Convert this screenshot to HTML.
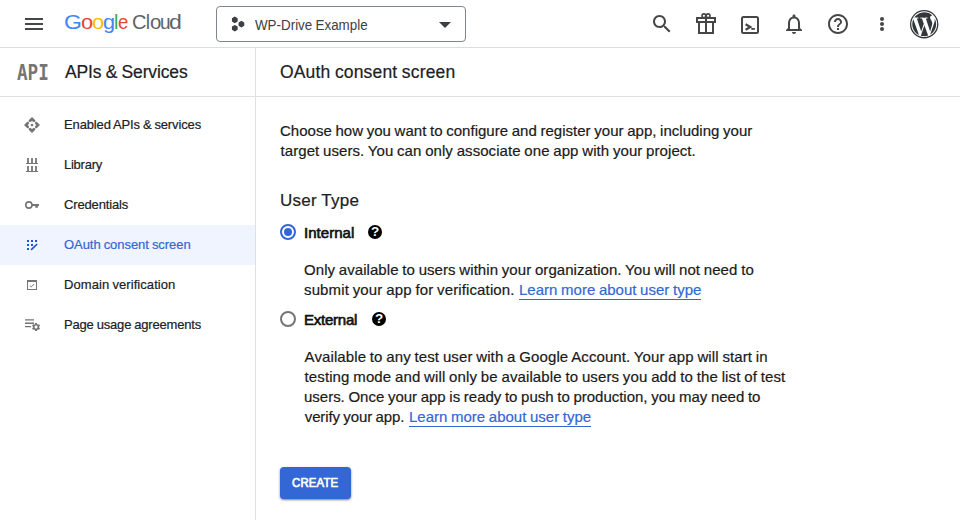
<!DOCTYPE html>
<html lang="en">
<head>
<meta charset="utf-8">
<title>OAuth consent screen – APIs &amp; Services – WP-Drive Example – Google Cloud console</title>
<style>
*{box-sizing:border-box;margin:0;padding:0}
html,body{width:960px;height:520px;overflow:hidden;background:#fff}
body{font-family:"Liberation Sans",sans-serif;color:#202124;position:relative;-webkit-text-stroke:0.2px currentColor;word-spacing:-0.031em}
.abs{position:absolute}
.t{position:absolute;white-space:nowrap;line-height:20px;height:20px;transform-origin:0 50%}
svg{position:absolute;overflow:visible}
#hdr{position:absolute;left:0;top:0;width:960px;height:48px;border-bottom:1px solid #dadce0;background:#fff}
#proj{position:absolute;left:216px;top:6px;width:250px;height:36px;border:1px solid #80868b;border-radius:4px}
#row2{position:absolute;left:0;top:48px;width:960px;height:49px;border-bottom:1px solid #e0e0e0}
#side{position:absolute;left:0;top:48px;width:256px;height:472px;border-right:1px solid #e0e0e0}
.nav{position:absolute;left:0;width:255px;height:40px}
.nav.on{background:#f0f4fe}
.nav .t{left:64px;top:10px;font-size:13px;color:#202124}
.nav.on .t{color:#3367d6}
.l{position:absolute;font-size:15px;line-height:20px;height:20px;color:#1a1a1a;white-space:nowrap}
.lk{color:#3367d6;border-bottom:1px solid #3367d6;height:20px}
.med{-webkit-text-stroke:0.65px currentColor;color:#111}
.radio{position:absolute;width:16px;height:16px;border-radius:50%;border:2px solid #757575}
.radio.on{border-color:#3367d6}
.radio.on::after{content:"";position:absolute;left:2px;top:2px;width:8px;height:8px;border-radius:50%;background:#3367d6}
.q{position:absolute;width:14px;height:14px;border-radius:50%;background:#000;color:#fff;font-size:13.500px;font-weight:bold;line-height:14.500px;text-align:center;-webkit-text-stroke:0}
</style>
</head>
<body>
<div id="hdr">
  <svg style="left:22px;top:12px" width="24" height="24" viewBox="0 0 24 24"><path fill="#444746" d="M3 18h18v-2H3v2zm0-5h18v-2H3v2zm0-7v2h18V6H3z"/></svg>
  <div id="logoG" class="abs" style="left:0;top:0;-webkit-text-stroke:0"><span class="t" id="lg_G" style="left:63.54px;top:12px;font-size:21px;color:#4285f4;transform:scaleX(1.095)">G</span><span class="t" id="lg_o1" style="left:81.01px;top:12px;font-size:19.5px;color:#ea4335;transform:scaleX(1.119)">o</span><span class="t" id="lg_o2" style="left:91.77px;top:12px;font-size:19.5px;color:#fbbc05;transform:scaleX(1.127)">o</span><span class="t" id="lg_g" style="left:103.41px;top:12px;font-size:19.5px;color:#4285f4;transform:scaleX(1.113)">g</span><span class="t" id="lg_l" style="left:114.04px;top:12px;font-size:19.5px;color:#34a853;transform:scaleX(1)">l</span><span class="t" id="lg_e" style="left:118.48px;top:12px;font-size:19.5px;color:#ea4335;transform:scaleX(0.952)">e</span> <span class="t" id="lg_C" style="left:131.54px;top:12px;font-size:19.5px;color:#5f6368;transform:scaleX(1.03)">C</span><span class="t" id="lg_l2" style="left:145.67px;top:12px;font-size:19.5px;color:#5f6368;transform:scaleX(1)">l</span><span class="t" id="lg_o3" style="left:149.84px;top:12px;font-size:19.5px;color:#5f6368;transform:scaleX(1.046)">o</span><span class="t" id="lg_u" style="left:160.21px;top:12px;font-size:19.5px;color:#5f6368;transform:scaleX(0.973)">u</span><span class="t" id="lg_d" style="left:169.21px;top:12px;font-size:19.5px;color:#5f6368;transform:scaleX(1.183)">d</span></div>
  <div id="proj">
    <svg style="left:14px;top:10px" width="16" height="16" viewBox="0 0 16 16" fill="#3c4043"><path d="M3.80 -0.40L6.66 1.25L6.66 4.55L3.80 6.20L0.94 4.55L0.94 1.25ZM10.40 3.80L13.26 5.45L13.26 8.75L10.40 10.40L7.54 8.75L7.54 5.45ZM3.80 7.90L6.66 9.55L6.66 12.85L3.80 14.50L0.94 12.85L0.94 9.55Z"/></svg>
    <div class="t" id="projT" style="left:38.400px;top:8px;font-size:15.500px;color:#3c4043;-webkit-text-stroke:0;transform:scaleX(0.862);letter-spacing:0.014px">WP-Drive Example</div>
    <svg style="left:222px;top:15px" width="12" height="6" viewBox="0 0 12 6"><path fill="#3c4043" d="M0 0h12L6 6z"/></svg>
  </div>
  <svg style="left:650px;top:12px" width="24" height="24" viewBox="0 0 24 24"><path fill="#444746" d="M15.5 14h-.79l-.28-.27C15.41 12.59 16 11.11 16 9.5 16 5.91 13.09 3 9.5 3S3 5.91 3 9.500 5.910 16 9.500 16c1.610 0 3.090-.59 4.230-1.570l.27.28v.79l5 4.990L20.490 19l-4.990-5zm-6 0C7.010 14 5 11.990 5 9.500S7.010 5 9.500 5 14 7.010 14 9.500 11.990 14 9.500 14z"/></svg>
  <svg id="gift" style="left:694px;top:12px" width="24" height="24" viewBox="0 0 24 24" fill="none" stroke="#444746" stroke-width="2"><rect x="3" y="6" width="18" height="4"/><path d="M5 10v11h14V10M12 5v16"/><circle cx="9.900" cy="3.800" r="1.900" stroke-width="1.600"/><circle cx="14.100" cy="3.800" r="1.900" stroke-width="1.600"/></svg>
  <svg id="term" style="left:738px;top:13px" width="24" height="24" viewBox="0 0 24 24" fill="none" stroke="#444746"><rect x="4" y="4" width="16" height="16" rx="1.500" stroke-width="2"/><path d="M7.600 11.300L12.300 14l-4.700 2.700" stroke-width="2.200"/><path d="M13.300 15.900h3.600" stroke-width="1.800"/></svg>
  <svg style="left:782px;top:12px" width="24" height="24" viewBox="0 0 24 24"><path fill="#444746" d="M12 22c1.100 0 2-.9 2-2h-4c0 1.100.9 2 2 2zm6-6v-5c0-3.070-1.630-5.640-4.500-6.320V4c0-.83-.67-1.500-1.500-1.500s-1.500.67-1.500 1.500v.68C7.640 5.360 6 7.920 6 11v5l-2 2v1h16v-1l-2-2zm-2 1H8v-6c0-2.480 1.510-4.500 4-4.500s4 2.020 4 4.500v6z"/></svg>
  <svg style="left:826px;top:12px" width="24" height="24" viewBox="0 0 24 24"><path fill="#444746" d="M11 18h2v-2h-2v2zm1-16C6.480 2 2 6.480 2 12s4.480 10 10 10 10-4.480 10-10S17.520 2 12 2zm0 18c-4.410 0-8-3.590-8-8s3.590-8 8-8 8 3.590 8 8-3.590 8-8 8zm0-14c-2.210 0-4 1.790-4 4h2c0-1.100.9-2 2-2s2 .9 2 2c0 2-3 1.750-3 5h2c0-2.250 3-2.500 3-5 0-2.210-1.790-4-4-4z"/></svg>
  <svg style="left:872px;top:14px" width="20" height="20" viewBox="0 0 20 20" fill="#444746"><circle cx="10" cy="5" r="2"/><circle cx="10" cy="10" r="2"/><circle cx="10" cy="15" r="2"/></svg>
  <svg id="wp" style="left:909.800px;top:9.800px" width="28.400" height="28.400" viewBox="0 0 24 24"><circle cx="12" cy="12" r="11.450" fill="#fff" stroke="#32373c" stroke-width="1.100"/><path fill="#32373c" transform="translate(12 12) scale(0.935) translate(-12 -12)" d="M21.469 6.825c.84 1.537 1.318 3.3 1.318 5.175 0 3.979-2.156 7.456-5.363 9.325l3.295-9.527c.615-1.54.82-2.771.82-3.864 0-.405-.026-.78-.07-1.11m-7.981.105c.647-.03 1.232-.105 1.232-.105.582-.075.514-.93-.067-.899 0 0-1.755.135-2.88.135-1.064 0-2.85-.15-2.85-.15-.585-.03-.661.855-.075.885 0 0 .54.061 1.125.09l1.68 4.605-2.37 7.08L5.354 6.9c.649-.03 1.234-.1 1.234-.1.585-.075.516-.93-.065-.896 0 0-1.746.138-2.874.138-.2 0-.438-.008-.69-.015C4.911 3.15 8.235 1.215 12 1.215c2.809 0 5.365 1.072 7.286 2.833-.046-.003-.091-.009-.141-.009-1.06 0-1.812.923-1.812 1.914 0 .89.513 1.643 1.06 2.531.411.72.89 1.643.89 2.977 0 .915-.354 1.994-.821 3.479l-1.075 3.585-3.9-11.61.001.014zM12 22.784c-1.059 0-2.081-.153-3.048-.437l3.237-9.406 3.315 9.087c.024.053.05.101.078.149-1.12.393-2.325.609-3.582.609M1.211 12c0-1.564.336-3.05.935-4.39L7.29 21.709C3.694 19.96 1.212 16.271 1.211 12"/></svg>
</div>
<div id="row2">
  <div class="t" id="api" style="left:16.500px;top:14px;font-family:'DejaVu Sans Mono','Liberation Mono',monospace;font-weight:bold;font-size:22px;line-height:22px;height:22px;color:#757575;transform-origin:0 0;transform:scaleX(0.800);-webkit-text-stroke:0">API</div>
  <div class="t" id="apisT" style="left:65px;top:14px;font-size:17.5px;color:#202124;letter-spacing:-0.125px">APIs &amp; Services</div>
  <div class="t" id="pageT" style="left:280px;top:14px;font-size:17.5px;color:#202124;letter-spacing:0.158px">OAuth consent screen</div>
</div>
<div id="side">
  <div class="nav" style="top:57px"><svg style="left:24px;top:12px" width="16" height="16" viewBox="0 0 16 16" fill="#757575"><path d="M8 0L11.300 3.300V4.400L9.800 5.200 8 3.900 6.200 5.200 4.700 4.400V3.300Z"/><path d="M8 0L11.300 3.300V4.400L9.800 5.200 8 3.900 6.200 5.200 4.700 4.400V3.300Z" transform="rotate(90 8 8)"/><path d="M8 0L11.300 3.300V4.400L9.800 5.200 8 3.900 6.200 5.200 4.700 4.400V3.300Z" transform="rotate(180 8 8)"/><path d="M8 0L11.300 3.300V4.400L9.800 5.200 8 3.900 6.200 5.200 4.700 4.400V3.300Z" transform="rotate(270 8 8)"/><circle cx="8" cy="8" r="1.300"/></svg><div class="t" id="n1" style="letter-spacing:-0.137px">Enabled APIs &amp; services</div></div>
  <div class="nav" style="top:97px"><svg style="left:24px;top:12px" width="16" height="16" viewBox="0 0 16 16" fill="#757575"><path d="M2 6h12v1.100H2zM2 14h12v1.100H2zM3.100 1h1.800v5.500H3.100zM7.100 1h1.800v5.500H7.100zM11.100 1h1.800v5.500h-1.800zM3.100 9h1.800v5.500H3.100zM7.100 9h1.800v5.500H7.100zM11.100 9h1.800v5.500h-1.800z"/></svg><div class="t" id="n2" style="letter-spacing:-0.250px">Library</div></div>
  <div class="nav" style="top:137px"><svg style="left:24px;top:12px" width="16" height="16" viewBox="0 0 16 16" fill="#757575"><circle cx="4.900" cy="8" r="3.100" fill="none" stroke="#757575" stroke-width="1.600"/><path d="M8 7.100h7v1.800h-1.100v1.900h-2.600V8.900H8z"/></svg><div class="t" id="n3" style="letter-spacing:-0.150px">Credentials</div></div>
  <div class="nav on" style="top:177px"><svg style="left:24px;top:12px" width="16" height="16" viewBox="0 0 16 16" fill="#1a56d6"><path d="M3 3h2v2H3zM7 3h2v2H7zM11 3h2v2h-2zM3 7h2v2H3zM7 7h2v2H7zM3 11h2v2H3z"/><path d="M7.600 12.400L12.700 7.500" stroke="#1a56d6" stroke-width="1.700" stroke-linecap="round"/></svg><div class="t" id="n4" style="letter-spacing:-0.052px">OAuth consent screen</div></div>
  <div class="nav" style="top:217px"><svg style="left:24px;top:12px" width="16" height="16" viewBox="0 0 16 16" fill="none" stroke="#757575"><rect x="3.500" y="3.500" width="9" height="9" stroke-width="1"/><path d="M3 4h10" stroke-width="2"/><path d="M5.800 8.500l1.500 1.400 3-3" stroke-width="1"/></svg><div class="t" id="n5" style="letter-spacing:0.072px">Domain verification</div></div>
  <div class="nav" style="top:257px"><svg style="left:24px;top:12px" width="16" height="16" viewBox="0 0 16 16" fill="#757575"><path d="M1 2.200h9v1.300H1zM1 5.600h9v1.300H1zM1 9h6v1.300H1z"/></svg><svg style="left:30.950px;top:16.750px" width="10.100" height="10.100" viewBox="0 0 24 24" fill="#757575"><path d="M19.14 12.94c.04-.3.06-.61.06-.94 0-.32-.02-.64-.07-.94l2.03-1.58c.18-.14.23-.41.12-.61l-1.92-3.32c-.12-.22-.37-.29-.59-.22l-2.39.96c-.5-.38-1.03-.7-1.62-.94l-.36-2.54c-.04-.24-.24-.41-.48-.41h-3.84c-.24 0-.43.17-.47.41l-.36 2.54c-.59.24-1.13.57-1.62.94l-2.39-.96c-.22-.08-.47 0-.59.22L2.74 8.87c-.12.21-.08.47.12.61l2.03 1.58c-.05.3-.09.63-.09.94s.02.64.07.94l-2.03 1.58c-.18.14-.23.41-.12.61l1.92 3.32c.12.22.37.29.59.22l2.39-.96c.5.38 1.03.7 1.62.94l.36 2.54c.05.24.24.41.48.41h3.84c.24 0 .44-.17.47-.41l.36-2.54c.59-.24 1.13-.56 1.62-.94l2.39.96c.22.08.47 0 .59-.22l1.92-3.32c.12-.22.07-.47-.12-.61l-2.01-1.58zM12 15.6c-1.98 0-3.6-1.62-3.6-3.6s1.62-3.6 3.6-3.6 3.6 1.62 3.6 3.6-1.62 3.6-3.6 3.6z"/></svg><div class="t" id="n6" style="letter-spacing:-0.170px">Page usage agreements</div></div>
</div>
<div id="main">
  <div class="l" id="p1a" style="left:280px;top:121px;letter-spacing:0.012px">Choose how you want to configure and register your app, including your</div>
  <div class="l" id="p1b" style="left:280.600px;top:141px;letter-spacing:0.065px">target users. You can only associate one app with your project.</div>
  <div class="t" id="utT" style="left:280px;top:191px;font-size:17px;letter-spacing:0.288px">User Type</div>
  <div class="radio on" style="left:280px;top:224.400px"></div>
  <div class="t med" id="intT" style="left:304px;top:223px;font-size:15px;letter-spacing:0.040px">Internal</div>
  <div class="q" style="left:368px;top:225px">?</div>
  <div class="l" id="p2a" style="left:304px;top:260px;letter-spacing:0.059px">Only available to users within your organization. You will not need to</div>
  <div class="l" id="p2b" style="left:304px;top:280px;letter-spacing:0.125px">submit your app for verification.</div>
  <a class="l lk" id="p2c" style="left:519px;top:280px;letter-spacing:0.002px">Learn more about user type</a>
  <div class="radio" style="left:280px;top:311.400px"></div>
  <div class="t med" id="extT" style="left:304px;top:310px;font-size:15px;letter-spacing:-0.243px">External</div>
  <div class="q" style="left:372px;top:312px">?</div>
  <div class="l" id="p3a" style="left:304.600px;top:347px;letter-spacing:0.098px">Available to any test user with a Google Account. Your app will start in</div>
  <div class="l" id="p3b" style="left:304.600px;top:367px;letter-spacing:0.103px">testing mode and will only be available to users you add to the list of test</div>
  <div class="l" id="p3c" style="left:304px;top:387px;letter-spacing:-0.011px">users. Once your app is ready to push to production, you may need to</div>
  <div class="l" id="p3d" style="left:304.800px;top:407px;letter-spacing:-0.133px">verify your app.</div>
  <a class="l lk" id="p3e" style="left:409px;top:407px;letter-spacing:-0.004px">Learn more about user type</a>
  <div class="abs" id="btn" style="left:280px;top:467px;width:71px;height:32px;background:#3367d6;border-radius:4px;box-shadow:0 1px 2px rgba(0,0,0,.35),0 1px 3px rgba(0,0,0,.2)"><div class="t med" id="btnT" style="left:12px;top:6px;font-size:12px;transform:scaleX(0.95);color:#fff;letter-spacing:0.150px">CREATE</div></div>
</div>
</body>
</html>
